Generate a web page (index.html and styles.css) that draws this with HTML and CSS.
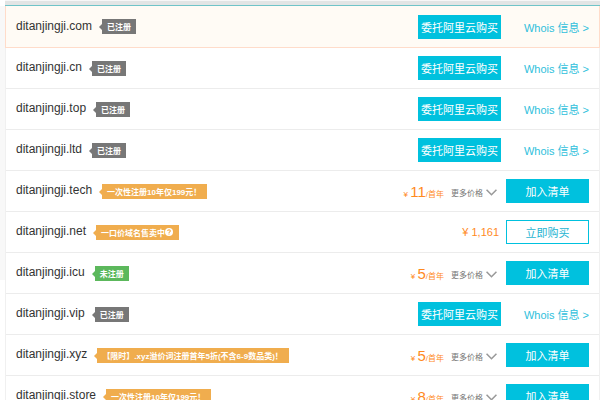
FILE: index.html
```html
<!DOCTYPE html>
<html lang="zh-CN">
<head>
    <meta charset="UTF-8">
    <meta name="viewport" content="width=device-width, initial-scale=1.0">
    <title>域名查询</title>
    <link rel="stylesheet" href="styles.css">
</head>
<body>
    <div class="top-bar"></div>
    <main class="page">
        <div class="side"></div>
        <ul class="results">
            <li class="row active">
                <span class="domain">ditanjingji.com</span>
                <span class="tag">已注册</span>
                <div class="actions">
                    <button class="btn">委托阿里云购买</button>
                    <a class="whois" href="#">Whois 信息 &gt;</a>
                </div>
            </li>
            <li class="row">
                <span class="domain">ditanjingji.cn</span>
                <span class="tag">已注册</span>
                <div class="actions">
                    <button class="btn">委托阿里云购买</button>
                    <a class="whois" href="#">Whois 信息 &gt;</a>
                </div>
            </li>
            <li class="row">
                <span class="domain">ditanjingji.top</span>
                <span class="tag">已注册</span>
                <div class="actions">
                    <button class="btn">委托阿里云购买</button>
                    <a class="whois" href="#">Whois 信息 &gt;</a>
                </div>
            </li>
            <li class="row">
                <span class="domain">ditanjingji.ltd</span>
                <span class="tag">已注册</span>
                <div class="actions">
                    <button class="btn">委托阿里云购买</button>
                    <a class="whois" href="#">Whois 信息 &gt;</a>
                </div>
            </li>
            <li class="row">
                <span class="domain">ditanjingji.tech</span>
                <span class="tag promo">一次性注册10年仅199元！</span>
                <div class="actions">
                    <span class="price">¥ <b>11</b>/首年</span>
                    <a class="more" href="#">更多价格<svg class="arrow" viewBox="0 0 10 6"><path d="M0.5 0.5L5 5L9.5 0.5"/></svg></a>
                    <button class="btn">加入清单</button>
                </div>
            </li>
            <li class="row">
                <span class="domain">ditanjingji.net</span>
                <span class="tag promo">一口价域名售卖中<svg class="help" viewBox="0 0 8 8"><circle cx="4" cy="4" r="4"/><path d="M2.7 3.1C2.7 1.4 5.4 1.5 5.3 3.1C5.2 3.9 4 3.9 4 4.9M4 5.6V6.6"/></svg></span>
                <div class="actions">
                    <span class="fixed-price">¥ 1,161</span>
                    <button class="btn outline">立即购买</button>
                </div>
            </li>
            <li class="row">
                <span class="domain">ditanjingji.icu</span>
                <span class="tag free">未注册</span>
                <div class="actions">
                    <span class="price">¥ <b>5</b>/首年</span>
                    <a class="more" href="#">更多价格<svg class="arrow" viewBox="0 0 10 6"><path d="M0.5 0.5L5 5L9.5 0.5"/></svg></a>
                    <button class="btn">加入清单</button>
                </div>
            </li>
            <li class="row">
                <span class="domain">ditanjingji.vip</span>
                <span class="tag">已注册</span>
                <div class="actions">
                    <button class="btn">委托阿里云购买</button>
                    <a class="whois" href="#">Whois 信息 &gt;</a>
                </div>
            </li>
            <li class="row">
                <span class="domain">ditanjingji.xyz</span>
                <span class="tag promo">【限时】.xyz溢价词注册首年5折(不含6-9数品类)！</span>
                <div class="actions">
                    <span class="price">¥ <b>5</b>/首年</span>
                    <a class="more" href="#">更多价格<svg class="arrow" viewBox="0 0 10 6"><path d="M0.5 0.5L5 5L9.5 0.5"/></svg></a>
                    <button class="btn">加入清单</button>
                </div>
            </li>
            <li class="row">
                <span class="domain">ditanjingji.store</span>
                <span class="tag promo">一次性注册10年仅199元！</span>
                <div class="actions">
                    <span class="price">¥ <b>8</b>/首年</span>
                    <a class="more" href="#">更多价格<svg class="arrow" viewBox="0 0 10 6"><path d="M0.5 0.5L5 5L9.5 0.5"/></svg></a>
                    <button class="btn">加入清单</button>
                </div>
            </li>
        </ul>
    </main>
</body>
</html>
```

FILE: styles.css
```css
* {
    box-sizing: border-box;
}

html {
    height: 100%;
    overflow: hidden;
}

body {
    height: 100%;
    margin: 0;
    overflow: hidden;
    background-color: #fff;
    color: #333;
    font-family: "Liberation Sans", "Noto Sans CJK SC", sans-serif;
    font-size: 12px;
}

.top-bar {
    height: 6px;
    margin-left: 5px;
    border-top: 1px solid #f7f7f7;
    border-bottom: 1px solid #6fc4c8;
    background-color: #e2e5e5;
}

.page {
    display: flex;
    align-items: flex-start;
}

.side {
    width: 5px;
    height: 274px;
    background-color: #f8f8f8;
}

.results {
    flex: 1;
    margin: 0;
    padding: 0;
    list-style: none;
    border-left: 1px solid #f0f0f0;
    border-right: 1px solid #f0f0f0;
}

.row {
    display: flex;
    align-items: center;
    height: 41px;
    padding: 0 10px;
    border-bottom: 1px solid #ececec;
    white-space: nowrap;
}

.row.active {
    height: 42px;
    margin: 0 -1px;
    border: 1px solid #ffdcca;
    border-top: none;
    background-color: #fffbf5;
}

.domain {
    padding-bottom: 2px;
    line-height: 16px;
}

.tag {
    position: relative;
    display: flex;
    align-items: center;
    height: 15px;
    margin-left: 10px;
    padding: 0 5px;
    background-color: #777;
    color: #fff;
    font-size: 8px;
    font-weight: bold;
}

/* small pointer towards the domain name */
.tag::before {
    content: "";
    position: absolute;
    top: 5px;
    left: -3px;
    border: 3px solid transparent;
    border-left: none;
    border-right-color: #777;
}

.tag.promo {
    padding-right: 6px;
    background-color: #f0ad4e;
}

.tag.promo::before {
    border-right-color: #f0ad4e;
}

.tag.free {
    background-color: #5cb85c;
}

.tag.free::before {
    border-right-color: #5cb85c;
}

.help {
    width: 8px;
    height: 8px;
    fill: #fff;
}

.help path {
    fill: none;
    stroke: #f0ad4e;
    stroke-width: 1.1;
}

.actions {
    display: flex;
    align-items: center;
    margin-left: auto;
}

.btn {
    width: 83px;
    height: 24px;
    padding: 0;
    border: 1px solid #00c1de;
    background-color: #00c1de;
    color: #fff;
    font-family: inherit;
    font-size: 11px;
    cursor: pointer;
}

.btn.outline {
    background-color: #fff;
    color: #1fb5d2;
}

.whois {
    width: 88px;
    color: #2fbfdc;
    font-size: 11px;
    text-align: right;
    text-decoration: none;
}

.price {
    color: #ff8a1e;
    font-size: 8px;
}

.price b {
    font-size: 15px;
    font-weight: normal;
}

.fixed-price {
    margin-right: 7px;
    color: #ff8a1e;
    font-size: 11px;
}

.more {
    display: flex;
    align-items: center;
    margin: 3px 9px 0 7px;
    color: #777;
    font-size: 8px;
    text-decoration: none;
}

.arrow {
    width: 11px;
    height: 7px;
    margin-left: 3px;
    fill: none;
    stroke: #999;
    stroke-width: 1.4;
}
```
